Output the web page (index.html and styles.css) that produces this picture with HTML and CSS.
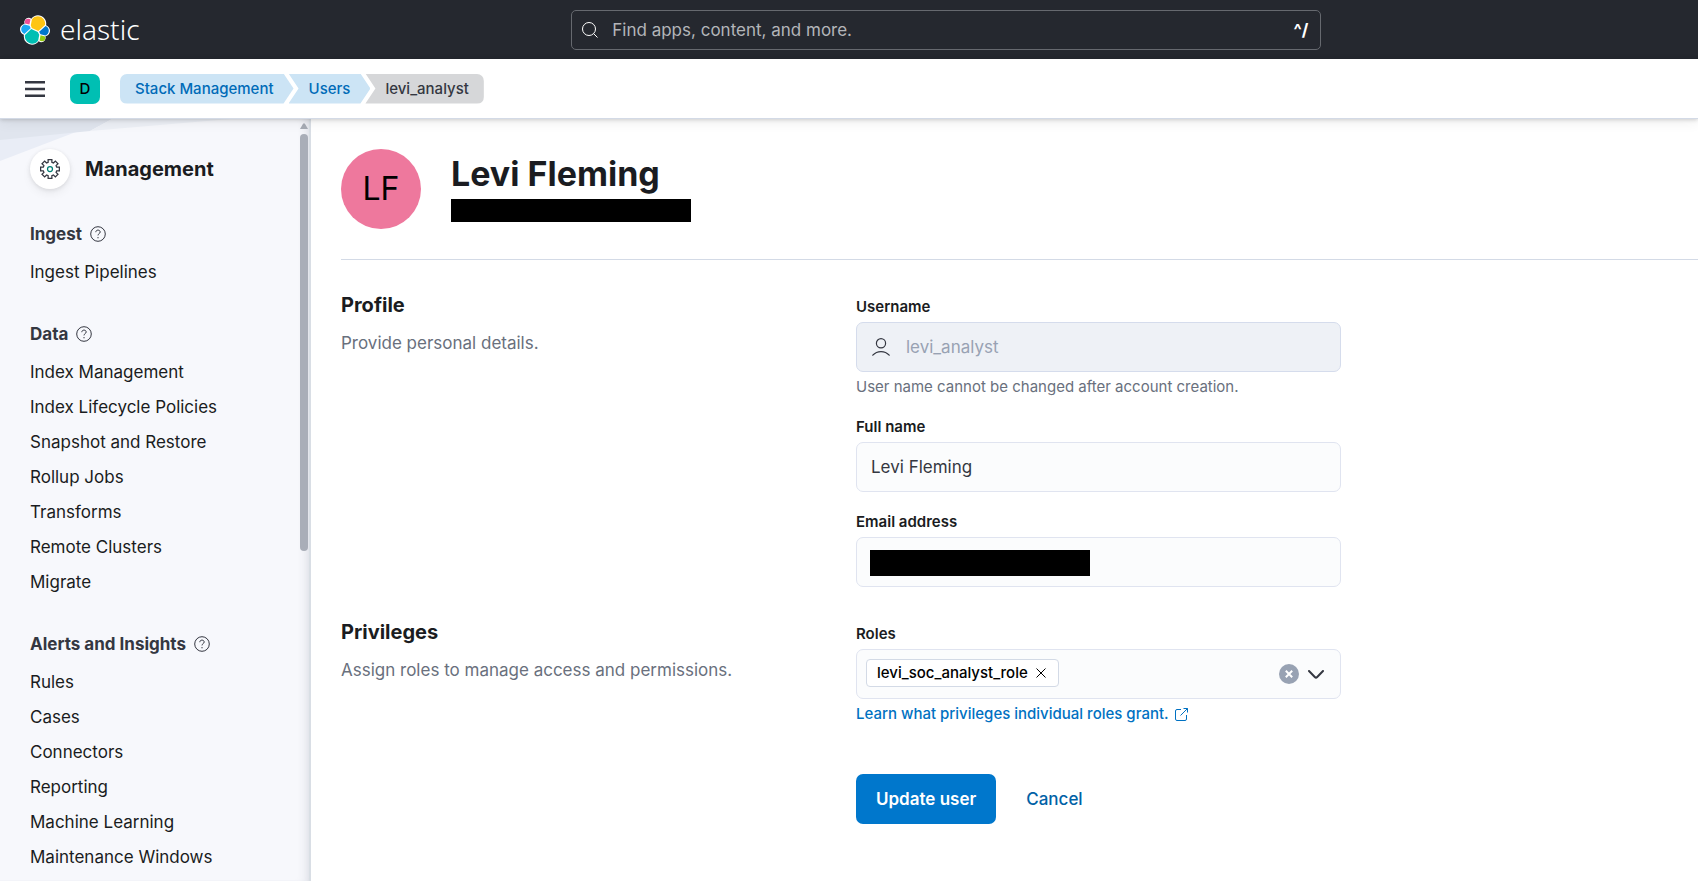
FILE: index.html
```html
<!DOCTYPE html>
<html lang="en">
<head>
<meta charset="utf-8">
<meta name="viewport" content="width=device-width, initial-scale=1">
<title>levi_analyst - Users - Elastic</title>
<link rel="stylesheet" href="styles.css">
</head>
<body>
<header class="topbar">
  <a class="brand" href="#">
    <svg class="brand-mark" viewBox="0 0 32 32" aria-hidden="true">
      <path fill="#fff" d="M32 16.77c0-2.678-1.664-5.035-4.165-5.948.112-.57.168-1.15.168-1.737 0-4.868-3.95-8.826-8.805-8.826-2.842 0-5.48 1.364-7.134 3.67a4.626 4.626 0 0 0-2.848-.97 4.665 4.665 0 0 0-4.38 6.264C1.66 10.128 0 12.514 0 15.193c0 2.69 1.676 5.055 4.188 5.962-.112.55-.168 1.13-.168 1.716a8.79 8.79 0 0 0 8.773 8.787 8.76 8.76 0 0 0 7.123-3.67 4.6 4.6 0 0 0 2.844.98 4.666 4.666 0 0 0 4.38-6.264C30.337 21.858 32 19.461 32 16.77"/>
      <path fill="#fec514" d="M12.58 13.787l7.002 3.211 7.066-6.211a7.85 7.85 0 0 0 .152-1.557c0-4.287-3.464-7.775-7.722-7.775a7.7 7.7 0 0 0-6.375 3.393l-1.176 6.118 1.053 2.82z"/>
      <path fill="#00bfb3" d="M5.333 21.215c-.1.5-.152 1.02-.152 1.54 0 4.3 3.493 7.81 7.784 7.81a7.77 7.77 0 0 0 6.416-3.4l1.165-6.08-1.555-2.973-7.03-3.213-6.628 6.317z"/>
      <path fill="#f04e98" d="M5.288 9.074l4.801 1.135 1.05-5.46a3.8 3.8 0 0 0-2.3-.776 3.8 3.8 0 0 0-3.783 3.806c0 .45.078.89.232 1.295z"/>
      <path fill="#1ba9f5" d="M4.87 10.218c-2.144.711-3.602 2.769-3.602 5.037 0 2.185 1.35 4.136 3.376 4.909l6.735-6.097-1.237-2.65-5.273-1.2z"/>
      <path fill="#93c90e" d="M20.873 27.166a3.79 3.79 0 0 0 2.29.78 3.8 3.8 0 0 0 3.78-3.804 3.8 3.8 0 0 0-.232-1.32l-4.797-1.125-1.041 5.469z"/>
      <path fill="#07c" d="M21.848 20.563l5.28 1.237c2.145-.711 3.603-2.769 3.603-5.04 0-2.181-1.352-4.129-3.38-4.9l-6.906 6.062 1.403 2.641z"/>
    </svg>
    <span class="brand-name">elastic</span>
  </a>
  <div class="search">
    <svg class="icon" viewBox="0 0 16 16" fill="none" stroke="currentColor" aria-hidden="true"><circle cx="7" cy="7" r="6.5"/><path d="M11.6 11.6l3.9 3.9"/></svg>
    <input class="search-input" type="search" placeholder="Find apps, content, and more." aria-label="Find apps, content, and more.">
    <span class="search-key">^/</span>
  </div>
</header>

<div class="navbar">
  <button class="menu-button" type="button" aria-label="Toggle primary navigation">
    <svg viewBox="0 0 20 16" aria-hidden="true"><path fill="currentColor" d="M0 0h20v2.4H0zM0 6.8h20v2.4H0zM0 13.6h20V16H0z"/></svg>
  </button>
  <button class="space" type="button" aria-label="Default space">D</button>
  <nav class="crumbs" aria-label="Breadcrumb">
    <a class="crumb crumb-first" href="#">Stack Management</a>
    <a class="crumb crumb-middle" href="#">Users</a>
    <span class="crumb crumb-last" aria-current="page">levi_analyst</span>
  </nav>
</div>

<div class="layout">
  <aside class="sidebar">
    <svg class="sidebar-art" viewBox="0 0 230 42" aria-hidden="true"><path fill="#e9edf6" d="M0 0h110L0 42z"/><path fill="#e0e5ee" d="M0 0h112L90 12 0 21z"/><path fill="#edf0f6" d="M112 0h118L90 12z"/></svg>
    <nav class="sidebar-nav" aria-label="Management">
      <div class="sidebar-head">
        <span class="app-icon">
          <svg viewBox="0 0 32 32" fill="none" stroke-width="2" aria-hidden="true"><path stroke="#343741" d="M13 1h6v4.4l2.5 1L24.600 3.300l4.200 4.200-3.100 3.100 1 2.400H31v6h-4.300l-1 2.400 3.100 3.100-4.200 4.200-3.100-3.100-2.500 1V31h-6v-4.400l-2.500-1-3.100 3.100-4.200-4.200 3.100-3.100-1-2.400H1v-6h4.300l1-2.400-3.100-3.100 4.200-4.200 3.100 3.100 2.500-1z"/><circle cx="16" cy="16" r="4" stroke="#017d73"/></svg>
        </span>
        <h2 class="sidebar-title">Management</h2>
      </div>
      <section class="nav-group">
        <h3 class="nav-heading">Ingest <svg class="help" viewBox="0 0 16 16" fill="none" stroke="currentColor" aria-hidden="true"><circle cx="8" cy="8" r="7.300"/><path d="M5.800 6.200c0-1.300 1-2.100 2.200-2.100s2.200.8 2.200 1.900c0 1.600-2.200 1.600-2.200 3.400M8 11v1.300"/></svg></h3>
        <ul class="nav-list"><li><a href="#">Ingest Pipelines</a></li></ul>
      </section>
      <section class="nav-group">
        <h3 class="nav-heading">Data <svg class="help" viewBox="0 0 16 16" fill="none" stroke="currentColor" aria-hidden="true"><circle cx="8" cy="8" r="7.300"/><path d="M5.800 6.200c0-1.300 1-2.100 2.200-2.100s2.200.8 2.200 1.900c0 1.600-2.200 1.600-2.200 3.400M8 11v1.300"/></svg></h3>
        <ul class="nav-list">
          <li><a href="#">Index Management</a></li>
          <li><a href="#">Index Lifecycle Policies</a></li>
          <li><a href="#">Snapshot and Restore</a></li>
          <li><a href="#">Rollup Jobs</a></li>
          <li><a href="#">Transforms</a></li>
          <li><a href="#">Remote Clusters</a></li>
          <li><a href="#">Migrate</a></li>
        </ul>
      </section>
      <section class="nav-group">
        <h3 class="nav-heading">Alerts and Insights <svg class="help" viewBox="0 0 16 16" fill="none" stroke="currentColor" aria-hidden="true"><circle cx="8" cy="8" r="7.300"/><path d="M5.800 6.200c0-1.300 1-2.100 2.200-2.100s2.200.8 2.200 1.900c0 1.600-2.200 1.600-2.200 3.400M8 11v1.300"/></svg></h3>
        <ul class="nav-list">
          <li><a href="#">Rules</a></li>
          <li><a href="#">Cases</a></li>
          <li><a href="#">Connectors</a></li>
          <li><a href="#">Reporting</a></li>
          <li><a href="#">Machine Learning</a></li>
          <li><a href="#">Maintenance Windows</a></li>
        </ul>
      </section>
    </nav>
    <div class="scrollbar" aria-hidden="true">
      <svg class="scroll-arrow" viewBox="0 0 8 6"><path fill="#a6abb4" d="M3.200.5h1.600L8 6H0z"/></svg>
      <div class="scroll-thumb"></div>
    </div>
  </aside>

  <main class="main">
    <div class="profile-head">
      <span class="avatar" aria-hidden="true">LF</span>
      <div>
        <h1 class="profile-name">Levi Fleming</h1>
        <div class="redacted-line"></div>
      </div>
    </div>
    <form class="form">
      <section class="form-section">
        <div>
          <h2 class="section-title">Profile</h2>
          <p class="section-text">Provide personal details.</p>
        </div>
        <div class="fields">
          <div class="field">
            <label class="label" for="username">Username</label>
            <div class="control control-disabled">
              <svg class="user-icon" viewBox="0 0 18 18" fill="none" stroke="currentColor" stroke-width="1.200" stroke-linecap="round" aria-hidden="true"><circle cx="9" cy="5.300" r="4.600"/><path d="M.8 17.200c4.300-4.900 12.100-4.900 16.400 0"/></svg>
              <input class="input" id="username" type="text" value="levi_analyst" disabled>
            </div>
            <p class="help-text">User name cannot be changed after account creation.</p>
          </div>
          <div class="field">
            <label class="label" for="fullname">Full name</label>
            <div class="control"><input class="input" id="fullname" type="text" value="Levi Fleming"></div>
          </div>
          <div class="field">
            <label class="label" for="email">Email address</label>
            <div class="control"><span class="redacted-value"></span><input class="input" id="email" type="email"></div>
          </div>
        </div>
      </section>
      <section class="form-section">
        <div>
          <h2 class="section-title">Privileges</h2>
          <p class="section-text">Assign roles to manage access and permissions.</p>
        </div>
        <div class="fields">
          <div class="field">
            <label class="label" for="roles">Roles</label>
            <div class="control control-combo">
              <span class="tag">levi_soc_analyst_role
                <button class="bare" type="button" aria-label="Remove levi_soc_analyst_role"><svg class="tag-x" viewBox="0 0 10 10" fill="none" stroke="currentColor" aria-hidden="true"><path d="M.5.5l9 9M9.500.5l-9 9"/></svg></button>
              </span>
              <input class="input" id="roles" type="text">
              <button class="bare" type="button" aria-label="Clear roles"><svg class="clear" viewBox="0 0 20 20" aria-hidden="true"><circle cx="10" cy="10" r="10" fill="#98a2b3"/><path d="M6.800 6.800l6.400 6.400M13.200 6.800l-6.400 6.400" stroke="#fff" stroke-width="2"/></svg></button>
              <button class="bare" type="button" aria-label="Open roles"><svg class="chevron" viewBox="0 0 16 9" fill="none" stroke="#343741" stroke-width="2" stroke-linecap="round" stroke-linejoin="round" aria-hidden="true"><path d="M1 1l5.800 6q1.200 1.200 2.400 0L15 1"/></svg></button>
            </div>
            <p class="help-text"><a class="doc-link" href="#">Learn what privileges individual roles grant. <svg class="external" viewBox="0 0 13 13" fill="none" stroke="currentColor" aria-hidden="true"><path d="M6 1.500H2A1.500 1.500 0 0 0 .5 3v8A1.500 1.500 0 0 0 2 12.500h8a1.500 1.500 0 0 0 1.500-1.500V7M8.500.5h4v4M12.500.5L5.500 7.500"/></svg></a></p>
          </div>
          <div class="actions">
            <button class="button-primary" type="submit">Update user</button>
            <button class="button-text" type="button">Cancel</button>
          </div>
        </div>
      </section>
    </form>
  </main>
</div>
</body>
</html>
```
FILE: styles.css
```css
* {
  box-sizing: border-box;
}

body {
  margin: 0;
  height: 100vh;
  display: flex;
  flex-direction: column;
  font-family: Inter, "Liberation Sans", sans-serif;
  font-size: 17px;
  line-height: 24px;
  color: #343741;
  background: #fff;
}

h1, h2, h3, p, ul {
  margin: 0;
  padding: 0;
}

button, input {
  font: inherit;
  color: inherit;
}

button {
  cursor: pointer;
  border: 0;
  padding: 0;
  background: none;
}

a {
  text-decoration: none;
}

svg {
  display: block;
  flex: none;
}

/* Top bar */
.topbar {
  flex: none;
  height: 59px;
  padding: 0 20px;
  display: grid;
  grid-template-columns: 17fr minmax(0, 750px) 11fr;
  align-items: center;
  background: #25282f;
  color: #fff;
}

.brand {
  display: flex;
  align-items: center;
  gap: 10px;
  color: #fff;
}

.brand-mark {
  width: 30px;
  height: 30px;
}

.brand-name {
  padding-bottom: 2px;
  font-family: "Noto Sans", sans-serif;
  font-size: 28px;
  font-weight: 300;
  line-height: 32px;
}

.search {
  height: 40px;
  padding: 0 12px 0 10px;
  display: flex;
  align-items: center;
  gap: 14px;
  border: 1px solid #66696f;
  border-radius: 5px;
}

.icon {
  width: 16px;
  height: 16px;
}

.search-input {
  flex: 1;
  min-width: 0;
  padding: 0;
  border: 0;
  outline: 0;
  background: none;
}

.search-input::placeholder {
  color: #b3b5b9;
  opacity: 1;
}

.search-key {
  font-weight: 700;
}

/* Navigation bar */
.navbar {
  position: relative;
  z-index: 1;
  flex: none;
  height: 60px;
  padding: 0 25px;
  display: flex;
  align-items: center;
  background: #fff;
  border-bottom: 1px solid #d3dae6;
  box-shadow: 0 1px 4px rgba(0, 0, 0, 0.16), 0 4px 12px rgba(0, 0, 0, 0.06);
}

.menu-button {
  width: 20px;
  color: #343741;
}

.space {
  width: 30px;
  height: 30px;
  margin: 0 20px 0 25px;
  border-radius: 7px;
  background: #00bfb3;
  color: #000;
  font-size: 15px;
  font-weight: 500;
}

.crumbs {
  display: flex;
  font-size: 15px;
  font-weight: 500;
  line-height: 30px;
}

.crumb {
  padding: 0 20px;
  background: #cce4f5;
  color: #006bb8;
}

.crumb-first {
  padding-left: 15px;
  border-radius: 7px 0 0 7px;
  clip-path: polygon(0 0, calc(100% - 10px) 0, 100% 50%, calc(100% - 10px) 100%, 0 100%);
}

.crumb-middle {
  margin-left: -5px;
  clip-path: polygon(0 0, calc(100% - 10px) 0, 100% 50%, calc(100% - 10px) 100%, 0 100%, 10px 50%);
}

.crumb-last {
  margin-left: -5px;
  padding-right: 15px;
  border-radius: 0 7px 7px 0;
  background: #d6d7d9;
  color: #343741;
  clip-path: polygon(0 0, 100% 0, 100% 100%, 0 100%, 10px 50%);
}

/* Page layout */
.layout {
  flex: 1;
  min-height: 0;
  display: flex;
}

.sidebar {
  position: relative;
  flex: none;
  width: 311px;
  overflow: hidden;
  display: flex;
  justify-content: space-between;
  background: #f7f8fc;
  box-shadow: inset -2px 0 1px #d9dee5, inset -12px 0 12px -10px rgba(60, 70, 90, 0.2);
}

.sidebar-art {
  position: absolute;
  top: 0;
  left: 0;
  width: 230px;
}

.sidebar-nav {
  position: relative;
  padding: 30px 0 0 30px;
}

.sidebar-head {
  display: flex;
  align-items: center;
  gap: 15px;
  margin-bottom: 33px;
}

.app-icon {
  width: 40px;
  height: 40px;
  display: grid;
  place-items: center;
  border-radius: 50%;
  background: #fff;
  box-shadow: 0 1px 4px rgba(0, 0, 0, 0.1), 0 5px 10px rgba(0, 0, 0, 0.05);
}

.app-icon svg {
  width: 20px;
  height: 20px;
}

.sidebar-title,
.section-title {
  font-size: 20px;
  font-weight: 700;
  line-height: 25px;
  color: #1a1c21;
}

.nav-group {
  margin-bottom: 38px;
}

.nav-heading {
  display: flex;
  align-items: center;
  gap: 8px;
  margin-bottom: 14px;
  font-size: 17px;
  font-weight: 700;
  line-height: 24px;
}

.help {
  width: 16px;
  height: 16px;
}

.nav-list {
  display: grid;
  gap: 11px;
  list-style: none;
}

.nav-list a {
  display: block;
  color: #1a1c21;
}

.scrollbar {
  width: 8px;
  margin: 4px 3px 0 0;
  display: flex;
  flex-direction: column;
  gap: 5px;
}

.scroll-arrow {
  width: 8px;
}

.scroll-thumb {
  height: 55%;
  border-radius: 4px;
  background: #a9aeb8;
}

/* Profile header */
.main {
  flex: 1;
  min-width: 0;
  padding: 30px 0 0 30px;
}

.profile-head {
  display: flex;
  gap: 30px;
  padding-bottom: 30px;
  border-bottom: 1px solid #d3dae6;
}

.avatar {
  width: 80px;
  height: 80px;
  display: grid;
  place-items: center;
  border-radius: 50%;
  background: #ee789d;
  color: #000;
  font-size: 32px;
}

.profile-name {
  padding-top: 4px;
  font-size: 34px;
  font-weight: 700;
  line-height: 42px;
  color: #1a1c21;
}

.redacted-line {
  width: 240px;
  height: 23px;
  margin-top: 4px;
  background: #000;
}

/* Form */
.form {
  max-width: 1000px;
  padding-top: 33px;
  display: grid;
  gap: 33px;
}

.form-section {
  display: grid;
  grid-template-columns: repeat(2, minmax(0, 1fr));
  gap: 30px;
}

.section-text {
  margin-top: 13px;
  color: #69707d;
}

.fields {
  display: grid;
  grid-template-columns: minmax(0, 1fr);
  gap: 19px;
  padding-top: 4px;
}

.label {
  display: block;
  margin-bottom: 5px;
  font-size: 15px;
  font-weight: 600;
  line-height: 20px;
  color: #1a1c21;
}

.control {
  position: relative;
  height: 50px;
  padding: 0 14px;
  display: flex;
  align-items: center;
  border: 1px solid #e0e4f0;
  border-radius: 7px;
  background: #fbfcfd;
}

.control-disabled {
  gap: 16px;
  padding-left: 15px;
  border-color: #d5dcec;
  background: #eef1f6;
}

.control-combo {
  gap: 9px;
  padding: 0 16px 0 9px;
}

.input {
  flex: 1;
  min-width: 0;
  padding: 0;
  border: 0;
  outline: 0;
  background: none;
}

.input:disabled {
  color: #98a2b3;
}

.user-icon {
  width: 18px;
  height: 18px;
}

.redacted-value {
  position: absolute;
  top: 12px;
  left: 13px;
  width: 220px;
  height: 26px;
  background: #000;
}

.field + .field {
  padding-top: 1px;
}

.help-text {
  padding-top: 5px;
  font-size: 15px;
  line-height: 20px;
  color: #69707d;
}

.tag {
  align-self: flex-start;
  height: 28px;
  margin-top: 9px;
  padding: 0 12px 0 10px;
  display: flex;
  align-items: center;
  gap: 8px;
  border: 1px solid #d3dae6;
  border-radius: 4px;
  background: #fff;
  color: #000;
  font-size: 15px;
  font-weight: 500;
}

.tag-x {
  width: 10px;
  height: 10px;
}

.clear {
  width: 20px;
  height: 20px;
}

.chevron {
  width: 16px;
}

.doc-link {
  display: flex;
  align-items: center;
  gap: 6px;
  color: #0071c2;
  font-weight: 500;
}

.external {
  width: 13px;
  height: 13px;
}

.actions {
  display: flex;
  gap: 30px;
  padding-top: 31px;
}

.button-primary,
.button-text {
  height: 50px;
}

.button-primary {
  padding: 0 20px;
  border-radius: 7px;
  background: #07c;
  color: #fff;
  font-weight: 600;
}

.button-text {
  color: #0061a6;
  font-weight: 500;
}
```
